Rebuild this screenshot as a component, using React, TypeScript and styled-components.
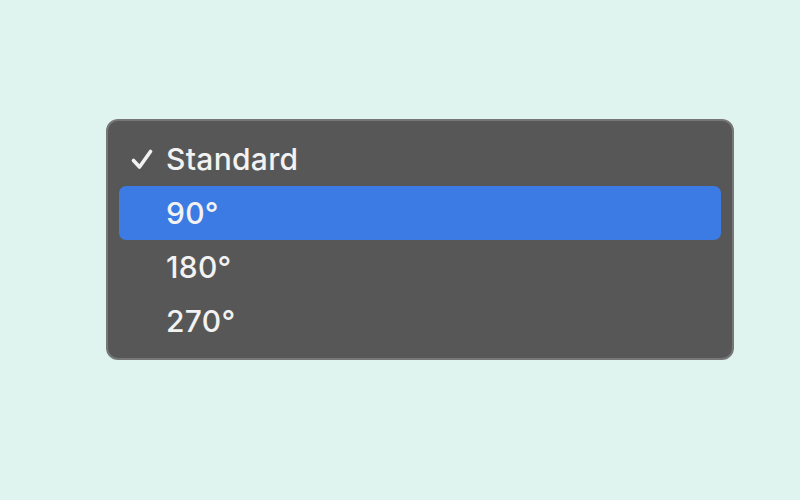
import { createGlobalStyle } from "styled-components";
import styled from "styled-components";

const GlobalStyle = createGlobalStyle`
    html, body {
        margin: 0;
        padding: 0;
        background-color: #dff3ef;
    }
`

const Page = styled.div`
    width: 800px;
    height: 500px;
    box-sizing: border-box;
    padding: 119px 0 0 106px;
`

const Menu = styled.div`
    width: 628px;
    height: 241px;
    box-sizing: border-box;
    background-color: #575757;
    border: 2px solid #777777;
    border-radius: 12px;
    padding: 11px 11px 10px 11px;
    display: flex;
    flex-direction: column;
    font-family: Inter, "Liberation Sans", sans-serif;
`

const Item = styled.div<{ $active?: boolean }>`
    height: 54px;
    display: flex;
    align-items: center;
    border-radius: 7px;
    background-color: ${p => p.$active ? '#3b7be3' : 'transparent'};
    color: #f2f2f2;
    font-size: 30px;
    font-weight: 500;
    letter-spacing: 0.3px;
`

const CheckSlot = styled.div`
    width: 47px;
    display: flex;
    justify-content: flex-end;
    padding-right: 13px;
    box-sizing: border-box;
`

const Check = () => (
    <svg width="22" height="21" viewBox="0 0 22 21">
        <path d="M2.5 11.5 L8.5 18 L19.5 2.5" fill="none" stroke="#f2f2f2" strokeWidth="3.6" strokeLinecap="round" strokeLinejoin="round" />
    </svg>
)

const options = ["Standard", "90°", "180°", "270°"]

const App = () => {
    const selected = 0
    const hovered = 1

    return (
        <Page>
            <GlobalStyle />
            <Menu>
                {options.map((o, i) => (
                    <Item key={o} $active={i === hovered}>
                        <CheckSlot>{i === selected && <Check />}</CheckSlot>
                        <span>{o}</span>
                    </Item>
                ))}
            </Menu>
        </Page>
    )
}

export default App;
